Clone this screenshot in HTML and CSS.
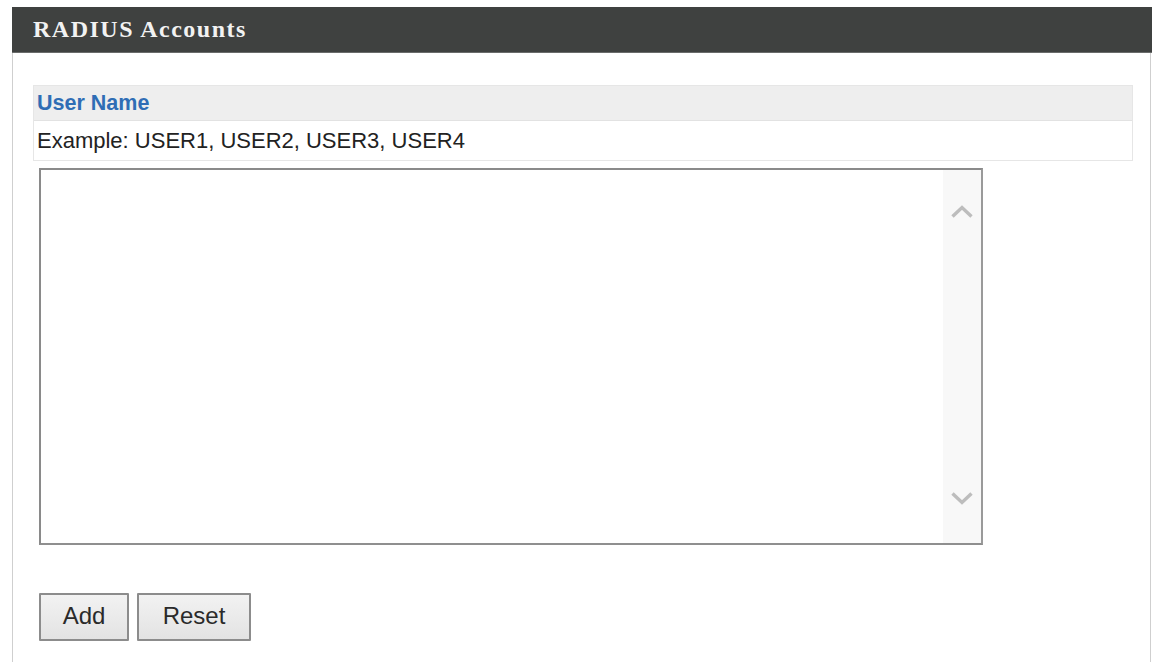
FILE: index.html
```html
<!DOCTYPE html>
<html>
<head>
<meta charset="utf-8">
<link rel="stylesheet" href="styles.css">
</head>
<body>
<div class="page">
  <div class="header"><span class="title">RADIUS Accounts</span></div>
  <div class="panel">
    <div class="table">
      <div class="row label-row">User Name</div>
      <div class="row example-row">Example: USER1, USER2, USER3, USER4</div>
    </div>
    <div class="textbox">
      <textarea class="input"></textarea>
      <div class="scroll">
        <svg class="chev" width="24" height="15" viewBox="0 0 24 15"><path d="M2.5 12.5 L12 3.5 L21.5 12.5" fill="none" stroke="#bdbdbd" stroke-width="3.4"/></svg>
        <svg class="chev" width="24" height="15" viewBox="0 0 24 15"><path d="M2.5 2.5 L12 11.5 L21.5 2.5" fill="none" stroke="#bdbdbd" stroke-width="3.4"/></svg>
      </div>
    </div>
    <div class="buttons">
      <button class="btn btn-add">Add</button>
      <button class="btn btn-reset">Reset</button>
    </div>
  </div>
</div>
</body>
</html>
```

FILE: styles.css
```css
html, body {
  margin: 0;
  padding: 0;
  background: #ffffff;
}
.page {
  padding: 7px 2px 0 12px;
  font-family: "Liberation Sans", Arial, sans-serif;
}
.header {
  height: 46px;
  background: #3f4140;
  border-bottom: 1px solid #6a6c6b;
  box-sizing: border-box;
  display: flex;
  align-items: center;
  padding-left: 21px;
}
.title {
  font-family: "Liberation Serif", "Times New Roman", serif;
  font-weight: bold;
  font-size: 24px;
  letter-spacing: 1.5px;
  color: #f2f2f2;
}
.panel {
  border-left: 1px solid #cfcfcf;
  border-right: 1px solid #cfcfcf;
  margin-right: 1px;
  padding: 32px 0 0 20px;
  height: 609px;
  box-sizing: border-box;
}
.table {
  width: 1100px;
  border: 1px solid #e6e6e6;
  box-sizing: border-box;
}
.row {
  display: flex;
  align-items: center;
  padding-left: 3px;
  box-sizing: border-box;
}
.label-row {
  height: 35px;
  background: #eeeeee;
  color: #2f6db5;
  font-weight: bold;
  font-size: 21.5px;
  border-bottom: 1px solid #e2e2e2;
}
.example-row {
  height: 39px;
  background: #ffffff;
  color: #222222;
  font-size: 22px;
}
.textbox {
  margin: 7px 0 0 6px;
  width: 944px;
  height: 377px;
  box-sizing: border-box;
  border: 2px solid #8a8a8a;
  border-right-color: #9a9a9a;
  border-bottom-color: #8f8f8f;
  display: flex;
  background: #ffffff;
}
.input {
  flex: 1;
  border: none;
  outline: none;
  resize: none;
  margin: 0;
  padding: 4px;
  font-family: "Liberation Sans", Arial, sans-serif;
  font-size: 18px;
  background: #ffffff;
}
.scroll {
  width: 38px;
  background: #f8f8f8;
  display: flex;
  flex-direction: column;
  align-items: center;
  justify-content: space-between;
  padding: 34px 0 37px;
  box-sizing: border-box;
}
.chev {
  display: block;
}
.buttons {
  display: flex;
  gap: 8px;
  margin: 48px 0 0 6px;
}
.btn {
  height: 48px;
  font-family: "Liberation Sans", Arial, sans-serif;
  font-size: 24px;
  color: #2a2a2a;
  background: linear-gradient(#f2f2f2, #e3e3e3);
  border: 2px solid #8c8c8c;
  border-radius: 1px;
  padding: 0 0 3px;
  margin: 0;
}
.btn-add {
  width: 90px;
}
.btn-reset {
  width: 114px;
}
```
